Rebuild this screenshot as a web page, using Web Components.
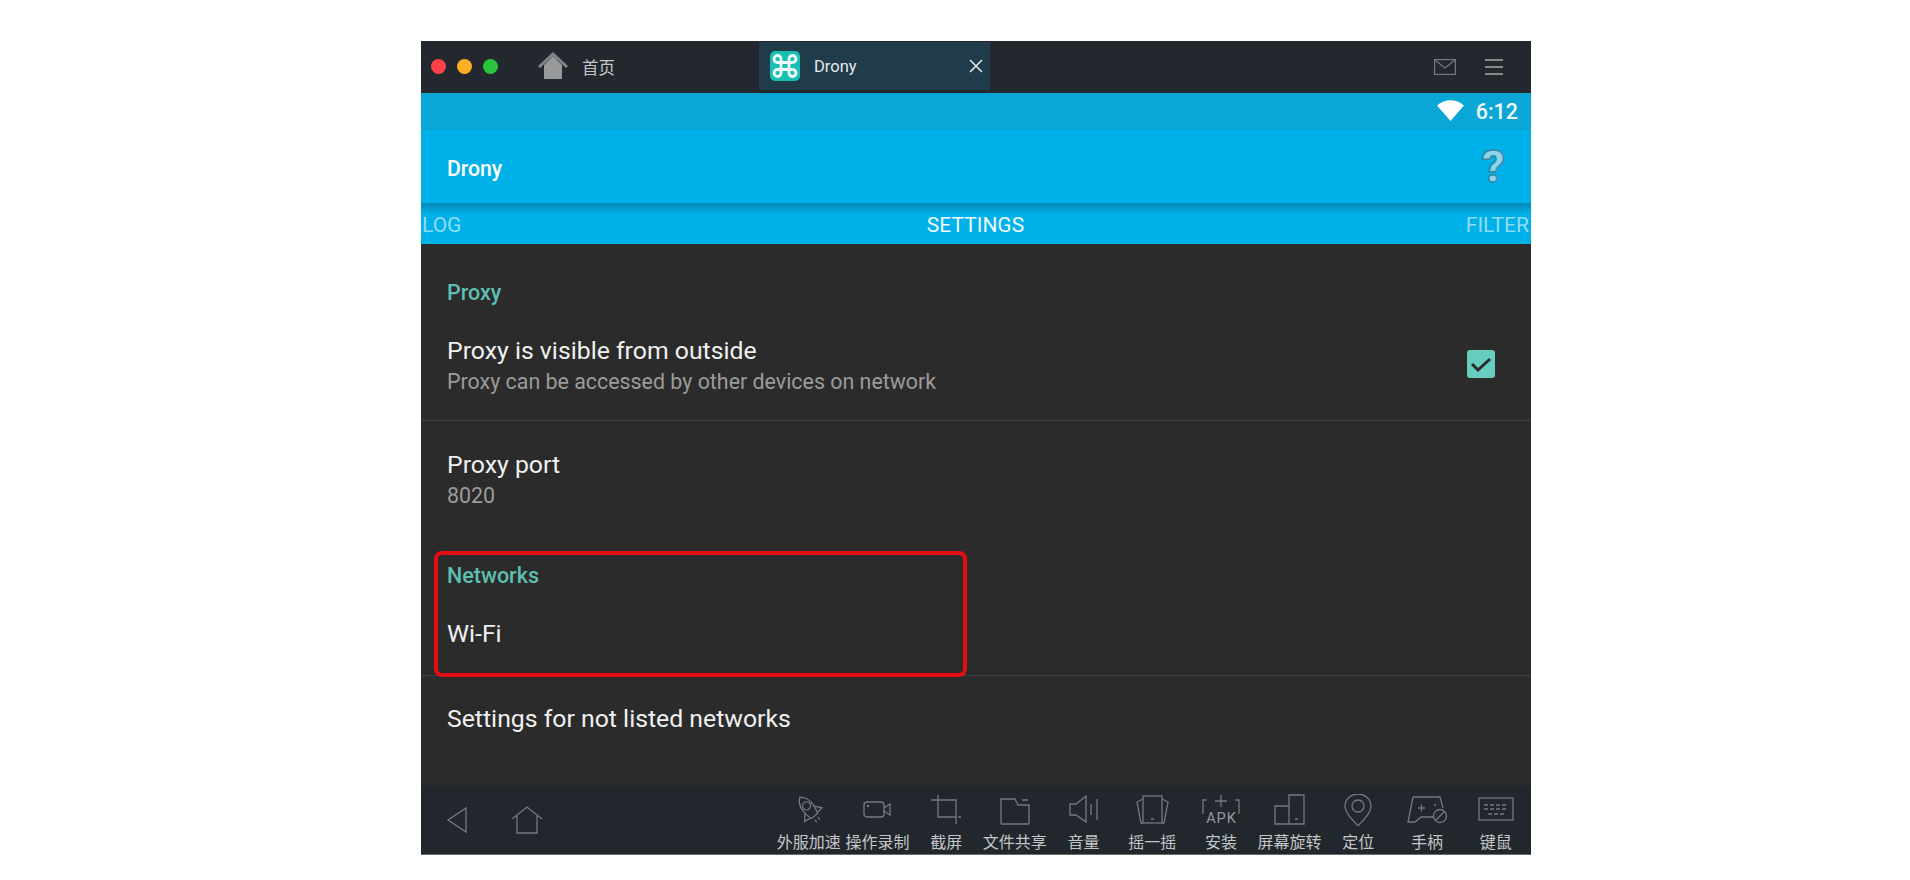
<!DOCTYPE html>
<html>
<head>
<meta charset="utf-8">
<title>Drony</title>
<style>
    html, body { margin: 0; background: #fff; }
    body { padding: 41px 379px 25px 421px; font-family: Roboto, "Noto Sans CJK SC", sans-serif; }
</style>
</head>
<body>
<emu-window>
    <title-bar slot="top"></title-bar>
    <status-bar slot="top"></status-bar>
    <app-bar slot="top">Drony</app-bar>
    <pager-tabs slot="top"></pager-tabs>

    <pref-category style="--top:37px">Proxy</pref-category>
    <pref-row title-text="Proxy is visible from outside" summary="Proxy can be accessed by other devices on network" checked divider style="--row:104px;--shift:-2px"></pref-row>
    <pref-row title-text="Proxy port" summary="8020" style="--row:119px;--shift:0px"></pref-row>
    <marked-section>
        <pref-category style="--top:24px">Networks</pref-category>
        <pref-row title-text="Wi-Fi" divider style="--row:76px;--shift:-4px"></pref-row>
    </marked-section>
    <pref-row title-text="Settings for not listed networks" style="--row:86px;--shift:0px"></pref-row>

    <dock-bar slot="bottom">
        <dock-item label="外服加速">
            <svg width="34" height="32" viewBox="0 0 34 32"><g transform="rotate(-38 17 15)"><path d="M17 0c5 4 6 9 6 13 0 4-1 8-2 11h-8c-1-3-2-7-2-11 0-4 1-9 6-13z"/><circle cx="17" cy="11" r="4"/><path d="M11 16l-5 6 6 1M23 16l5 6-6 1M15 27v3M19 27v3"/></g></svg>
        </dock-item>
        <dock-item label="操作录制">
            <svg width="34" height="32" viewBox="0 0 34 32"><rect x="4" y="8" width="20" height="15" rx="3"/><path d="M24 14l6-4v11l-6-4"/><circle cx="8" cy="12" r=".6"/></svg>
        </dock-item>
        <dock-item label="截屏">
            <svg width="34" height="32" viewBox="0 0 34 32"><path d="M2 6h7M9 1v22h18M9 6h18v24M29 23h3"/></svg>
        </dock-item>
        <dock-item label="文件共享">
            <svg width="34" height="32" viewBox="0 0 34 32"><path d="M3 5h14l3 6h11v18a1 1 0 0 1-1 1H4a1 1 0 0 1-1-1zM24 6h6"/></svg>
        </dock-item>
        <dock-item label="音量">
            <svg width="34" height="32" viewBox="0 0 34 32"><path d="M3 10h6l10-8v26l-10-7H3zM24 10v11M30 5v21"/></svg>
        </dock-item>
        <dock-item label="摇一摇">
            <svg width="34" height="32" viewBox="0 0 34 32"><rect x="8" y="2" width="19" height="27"/><path d="M8 5L2 8l4 21h2M27 5l6 3-4 21h-2M16 25h3"/></svg>
        </dock-item>
        <dock-item label="安装">
            <svg width="40" height="32" viewBox="0 0 40 32"><path d="M5.500 6H2v14M34.500 6H38v14M20 1v12M14 7h12"/><text x="20.500" y="29" text-anchor="middle" font-size="14.500" letter-spacing="1" fill="#96989b" stroke="none">APK</text></svg>
        </dock-item>
        <dock-item label="屏幕旋转">
            <svg width="34" height="32" viewBox="0 0 34 32"><path d="M16 12H2v18h14M16 1h15v29H16zM22 25h3"/></svg>
        </dock-item>
        <dock-item label="定位">
            <svg width="34" height="32" viewBox="0 0 34 32"><path d="M17 32C9 23 4 18 4 12a13 12 0 0 1 26 0c0 6-5 11-13 20z"/><circle cx="17" cy="12" r="6"/></svg>
        </dock-item>
        <dock-item label="手柄">
            <svg width="42" height="32" viewBox="0 0 42 32"><path d="M7 3h27l3 11M27 23H15l-6 5H2L7 3M12 14h7M15.500 10.500v7M28 11h2"/><circle cx="34" cy="22" r="6.500"/><path d="M30 26l8-8"/></svg>
        </dock-item>
        <dock-item label="键鼠">
            <svg width="36" height="32" viewBox="0 0 36 32"><rect x="1" y="4" width="34" height="22"/><path d="M6 11h24M6 15h24M10 20h16" stroke-dasharray="4 2"/></svg>
        </dock-item>
    </dock-bar>
</emu-window>

<script>
class EmuWindow extends HTMLElement {
    constructor() {
        super();
        this.attachShadow({ mode: 'open' }).innerHTML = `
            <style>
                :host { display: flex; flex-direction: column; width: 1110px; height: 814px; background: #2b2b2b; }
                main { flex: 1; }
            </style>
            <slot name="top"></slot>
            <main><slot></slot></main>
            <slot name="bottom"></slot>`;
    }
}

class TitleBar extends HTMLElement {
    constructor() {
        super();
        this.attachShadow({ mode: 'open' }).innerHTML = `
            <style>
                :host { display: flex; align-items: center; height: 52px; background: #23272e; color: #c4c6c8; font-size: 16.500px; }
                .dots { display: flex; gap: 11px; margin: 0 0 2px 10px; }
                .dots i { width: 15px; height: 15px; border-radius: 50%; }
                .home { display: flex; align-items: center; margin: 0 0 0 39px; width: 222px; gap: 13px; }
                .home svg { margin-bottom: 2px; }
                .tab { display: flex; align-items: center; width: 231px; height: 48px; margin-bottom: 2px; background: #203b4a; color: #e4e8ea; }
                .tab span { margin-left: 14px; flex: 1; }
                .tab svg.logo { margin-left: 11px; }
                .tab svg.close { margin-right: 5px; }
                .right { margin-left: auto; display: flex; align-items: center; gap: 29px; margin-right: 28px; }
            </style>
            <div class="dots"><i style="background:#fc4248"></i><i style="background:#fdb024"></i><i style="background:#29c53c"></i></div>
            <div class="home">
                <svg width="32" height="30" viewBox="0 0 32 30"><path d="M7 14L16 5l9 9v14H7z" fill="#97999b"/><path d="M2 16L16 3l14 13" fill="none" stroke="#828486" stroke-width="3"/></svg>
                <span>首页</span>
            </div>
            <div class="tab">
                <svg class="logo" width="30" height="30" viewBox="0 0 30 30"><rect width="30" height="30" rx="5" fill="#18c0b4"/><path d="M11 11V8a3.500 3.500 0 1 0-3.500 3.500H22.500A3.500 3.500 0 1 0 19 8v14a3.500 3.500 0 1 0 3.500-3.500H7.500A3.500 3.500 0 1 0 11 22z" fill="none" stroke="#f1fbfa" stroke-width="2.800"/></svg>
                <span>Drony</span>
                <svg class="close" width="18" height="18" viewBox="0 0 18 18"><path d="M3 3l12 12M15 3L3 15" stroke="#e2e6e8" stroke-width="1.600"/></svg>
            </div>
            <div class="right">
                <svg width="22" height="16" viewBox="0 0 22 16" fill="none" stroke="#76787c" stroke-width="1.200"><rect x=".6" y=".6" width="20.800" height="14.800"/><path d="M1 1l10 8 10-8"/></svg>
                <svg width="18" height="18" viewBox="0 0 18 18"><path d="M0 2h18M0 9h18M0 16h18" stroke="#a8aaac" stroke-width="1.600"/></svg>
            </div>`;
    }
}

class StatusBar extends HTMLElement {
    constructor() {
        super();
        this.attachShadow({ mode: 'open' }).innerHTML = `
            <style>
                :host { display: flex; align-items: center; justify-content: flex-end; gap: 12px; height: 37px; padding-right: 13px; background: #0aa6d6; color: #eefaff; font-size: 21.500px; font-weight: 500; }
                svg { margin-bottom: 2px; }
            </style>
            <svg width="27" height="21" viewBox="0 0 27 21"><path d="M0 5.500C8-1.500 19-1.500 27 5.500L13.500 21z" fill="#fff"/></svg>
            <span>6:12</span>`;
    }
}

class AppBar extends HTMLElement {
    constructor() {
        super();
        this.attachShadow({ mode: 'open' }).innerHTML = `
            <style>
                :host { display: flex; align-items: center; justify-content: space-between; height: 73px; padding: 0 26px; background: #00b1e9; color: #fff; font-size: 21.200px; font-weight: 500; }
                span { padding-top: 3px; }
                b { font-size: 45px; font-weight: 900; line-height: 1; color: #8bd6ef; -webkit-text-stroke: 1.500px #3a86a4; }
            </style>
            <span><slot></slot></span>
            <b>?</b>`;
    }
}

class PagerTabs extends HTMLElement {
    constructor() {
        super();
        this.attachShadow({ mode: 'open' }).innerHTML = `
            <style>
                :host { display: grid; grid-template-columns: 1fr auto 1fr; align-items: center; height: 41px; padding: 3px 2px 0 1px; box-sizing: border-box; background: linear-gradient(#0488b4, #00b1e9 11px); color: #8fdcf5; font-size: 21px; }
                .on { color: #eefaff; }
                .end { text-align: right; }
            </style>
            <span>LOG</span>
            <span class="on">SETTINGS</span>
            <span class="end">FILTER</span>`;
    }
}

class PrefCategory extends HTMLElement {
    constructor() {
        super();
        this.attachShadow({ mode: 'open' }).innerHTML = `
            <style>
                :host { display: block; padding: var(--top, 24px) 26px 12px; color: #5ebfb0; font-size: 21.500px; font-weight: 500; line-height: 24px; }
            </style>
            <slot></slot>`;
    }
}

class PrefRow extends HTMLElement {
    constructor() {
        super();
        const summary = this.getAttribute('summary');
        const checked = this.hasAttribute('checked');
        this.attachShadow({ mode: 'open' }).innerHTML = `
            <style>
                :host { display: flex; align-items: center; height: var(--row, 80px); padding: 0 26px; box-sizing: border-box; position: relative; }
                :host([divider]) { border-bottom: 1px solid #3e3e3e; }
                .text { flex: 1; transform: translateY(var(--shift, 0)); }
                .t { color: #f0f0f0; font-size: 24.800px; line-height: 30px; }
                .s { color: #9b9b9b; font-size: 21.400px; line-height: 32px; }
                .check { width: 28px; height: 28px; border-radius: 3px; background: #67cdbf; margin: 0 10px 10px 0; }
            </style>
            <div class="text">
                <div class="t">${this.getAttribute('title-text')}</div>
                ${summary ? `<div class="s">${summary}</div>` : ''}
            </div>
            ${checked ? `<svg class="check" viewBox="0 0 28 28"><path d="M5 14l6 6 12-11" fill="none" stroke="#2b2b2b" stroke-width="3"/></svg>` : ''}`;
    }
}

class MarkedSection extends HTMLElement {
    constructor() {
        super();
        this.attachShadow({ mode: 'open' }).innerHTML = `
            <style>
                :host { display: block; position: relative; }
                .mark { position: absolute; left: 13px; top: 11px; width: 533px; height: 126px; box-sizing: border-box; border: 4px solid #e60d12; border-radius: 8px; }
            </style>
            <slot></slot>
            <div class="mark"></div>`;
    }
}

class DockBar extends HTMLElement {
    constructor() {
        super();
        this.attachShadow({ mode: 'open' }).innerHTML = `
            <style>
                :host { display: flex; align-items: stretch; height: 70px; background: #22272e; border-bottom: 1px solid #6c6f72; box-sizing: border-box; }
                .nav { display: flex; align-items: center; gap: 43px; padding: 0 0 0 25px; flex: 1; }
                svg { fill: none; stroke: #76787c; stroke-width: 1.300; }
                .items { display: flex; padding-right: 1px; }
            </style>
            <div class="nav">
                <svg width="22" height="28" viewBox="0 0 22 28"><path d="M20 2v24L2 14z"/></svg>
                <svg width="32" height="28" viewBox="0 0 32 28"><path d="M1 13L16 1l15 12M6 10v17h20V10"/></svg>
            </div>
            <div class="items"><slot></slot></div>`;
    }
}

class DockItem extends HTMLElement {
    constructor() {
        super();
        this.attachShadow({ mode: 'open' }).innerHTML = `
            <style>
                :host { display: flex; flex-direction: column; align-items: center; width: 68.700px; padding-top: 9px; box-sizing: border-box; color: #c3c5c7; font-size: 16px; line-height: 22px; white-space: nowrap; }
                .icon { height: 33px; margin-bottom: 6px; }
                ::slotted(svg) { display: block; fill: none; stroke: #76787c; stroke-width: 1.300; }
            </style>
            <div class="icon"><slot></slot></div>
            <span>${this.getAttribute('label')}</span>`;
    }
}

customElements.define('emu-window', EmuWindow);
customElements.define('title-bar', TitleBar);
customElements.define('status-bar', StatusBar);
customElements.define('app-bar', AppBar);
customElements.define('pager-tabs', PagerTabs);
customElements.define('pref-category', PrefCategory);
customElements.define('pref-row', PrefRow);
customElements.define('marked-section', MarkedSection);
customElements.define('dock-bar', DockBar);
customElements.define('dock-item', DockItem);
</script>
</body>
</html>
